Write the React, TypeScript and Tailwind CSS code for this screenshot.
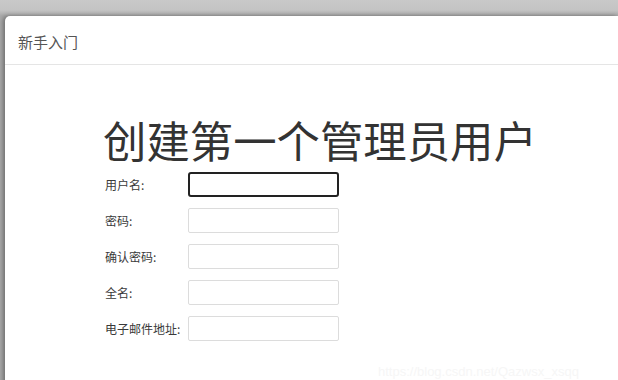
import React from "react";

const font = { fontFamily: '"Noto Sans CJK SC", "Noto Sans", sans-serif' };

const fields = ["用户名:", "密码:", "确认密码:", "全名:", "电子邮件地址:"];

export default function App() {
  return (
    <div
      className="relative w-[618px] h-[380px] overflow-hidden bg-[linear-gradient(to_bottom,#c9c9c9_0px,#c4c4c4_10px,#a9a9a9_16px)] pt-[16px] pl-[5px]"
      style={font}
    >
      <div className="h-[400px] bg-white rounded-tl-[5px] shadow-[-2px_0_4px_rgba(0,0,0,0.35)]">
        <div className="h-[49px] border-b border-[#e5e5e5] pl-[13px] pt-[18px] text-[15px] leading-none text-[#555]">
          新手入门
        </div>
        <div className="pl-[98px] pt-[53px]">
          <h1 className="text-[43.4px] leading-none text-[#333] font-normal">
            创建第一个管理员用户
          </h1>
          <div className="mt-[11px] flex flex-col gap-[11px] pl-[2px]">
            {fields.map((f, i) => (
              <div key={f} className="flex items-center h-[25px]">
                <div className="w-[83px] text-[12px] text-[#3a3a3a] leading-none">{f}</div>
                <div
                  className={
                    i === 0
                      ? "w-[151px] h-[25px] rounded-[3px] border-2 border-[#222]"
                      : "w-[151px] h-[25px] rounded-[2px] border border-[#dcdcdc]"
                  }
                />
              </div>
            ))}
          </div>
        </div>
      </div>
      <div
        className="absolute left-[378px] top-[365px] text-[13px] leading-none text-[#f6f6f6] whitespace-nowrap"
        style={{ fontFamily: '"Liberation Sans", sans-serif' }}
      >
        https://blog.csdn.net/Qazwsx_xsqq
      </div>
    </div>
  );
}
